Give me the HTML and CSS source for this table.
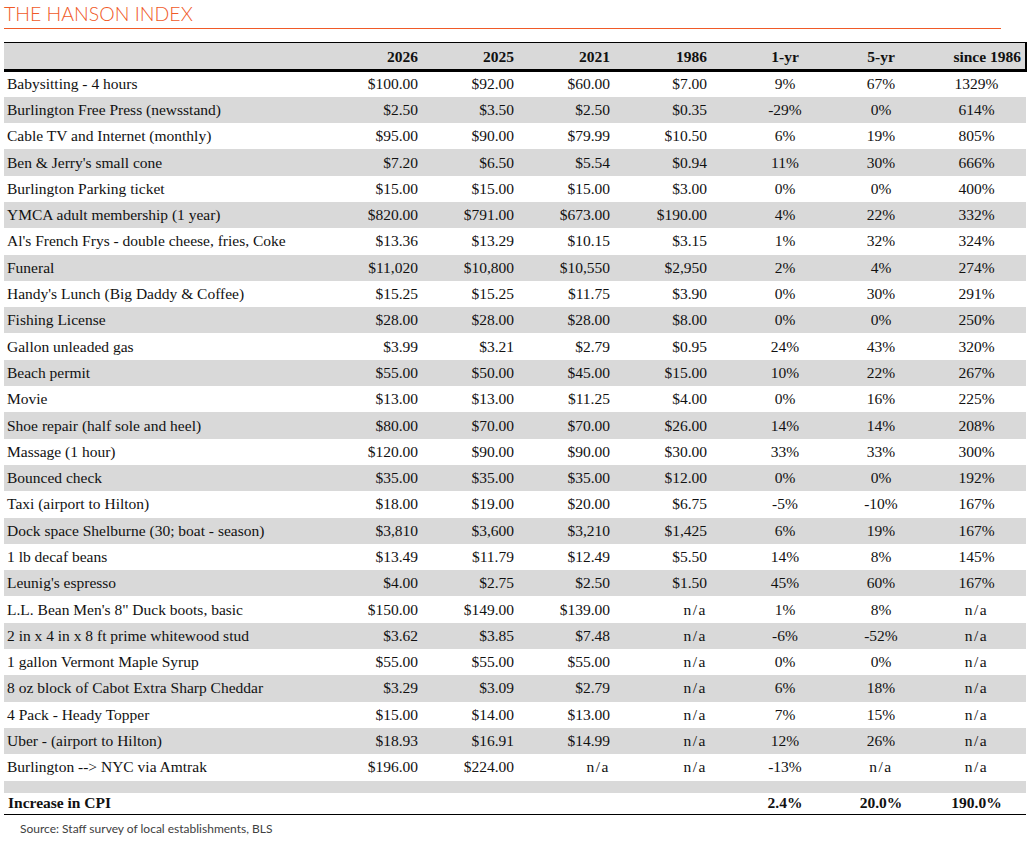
FILE: index.html
```html
<!DOCTYPE html>
<html>
<head>
<meta charset="utf-8">
<link rel="stylesheet" href="styles.css">
</head>
<body>
<div class="page">
  <h1 class="title">THE HANSON INDEX</h1>
  <table class="index">
    <colgroup>
      <col class="c-label"><col class="c-2026"><col class="c-m"><col class="c-m"><col class="c-1986"><col class="c-p"><col class="c-p"><col class="c-last">
    </colgroup>
    <thead>
      <tr><th></th><th class="m">2026</th><th class="m">2025</th><th class="m">2021</th><th class="m">1986</th><th class="p">1-yr</th><th class="p">5-yr</th><th class="p last">since 1986</th></tr>
    </thead>
    <tbody>
      <tr><td>Babysitting - 4 hours</td><td class="m">$100.00</td><td class="m">$92.00</td><td class="m">$60.00</td><td class="m">$7.00</td><td class="p">9%</td><td class="p">67%</td><td class="p">1329%</td></tr>
      <tr><td>Burlington Free Press (newsstand)</td><td class="m">$2.50</td><td class="m">$3.50</td><td class="m">$2.50</td><td class="m">$0.35</td><td class="p">-29%</td><td class="p">0%</td><td class="p">614%</td></tr>
      <tr><td>Cable TV and Internet (monthly)</td><td class="m">$95.00</td><td class="m">$90.00</td><td class="m">$79.99</td><td class="m">$10.50</td><td class="p">6%</td><td class="p">19%</td><td class="p">805%</td></tr>
      <tr><td>Ben &amp; Jerry's small cone</td><td class="m">$7.20</td><td class="m">$6.50</td><td class="m">$5.54</td><td class="m">$0.94</td><td class="p">11%</td><td class="p">30%</td><td class="p">666%</td></tr>
      <tr><td>Burlington Parking ticket</td><td class="m">$15.00</td><td class="m">$15.00</td><td class="m">$15.00</td><td class="m">$3.00</td><td class="p">0%</td><td class="p">0%</td><td class="p">400%</td></tr>
      <tr><td>YMCA adult membership (1 year)</td><td class="m">$820.00</td><td class="m">$791.00</td><td class="m">$673.00</td><td class="m">$190.00</td><td class="p">4%</td><td class="p">22%</td><td class="p">332%</td></tr>
      <tr><td>Al's French Frys - double cheese, fries, Coke</td><td class="m">$13.36</td><td class="m">$13.29</td><td class="m">$10.15</td><td class="m">$3.15</td><td class="p">1%</td><td class="p">32%</td><td class="p">324%</td></tr>
      <tr><td>Funeral</td><td class="m">$11,020</td><td class="m">$10,800</td><td class="m">$10,550</td><td class="m">$2,950</td><td class="p">2%</td><td class="p">4%</td><td class="p">274%</td></tr>
      <tr><td>Handy's Lunch (Big Daddy &amp; Coffee)</td><td class="m">$15.25</td><td class="m">$15.25</td><td class="m">$11.75</td><td class="m">$3.90</td><td class="p">0%</td><td class="p">30%</td><td class="p">291%</td></tr>
      <tr><td>Fishing License</td><td class="m">$28.00</td><td class="m">$28.00</td><td class="m">$28.00</td><td class="m">$8.00</td><td class="p">0%</td><td class="p">0%</td><td class="p">250%</td></tr>
      <tr><td>Gallon unleaded gas</td><td class="m">$3.99</td><td class="m">$3.21</td><td class="m">$2.79</td><td class="m">$0.95</td><td class="p">24%</td><td class="p">43%</td><td class="p">320%</td></tr>
      <tr><td>Beach permit</td><td class="m">$55.00</td><td class="m">$50.00</td><td class="m">$45.00</td><td class="m">$15.00</td><td class="p">10%</td><td class="p">22%</td><td class="p">267%</td></tr>
      <tr><td>Movie</td><td class="m">$13.00</td><td class="m">$13.00</td><td class="m">$11.25</td><td class="m">$4.00</td><td class="p">0%</td><td class="p">16%</td><td class="p">225%</td></tr>
      <tr><td>Shoe repair (half sole and heel)</td><td class="m">$80.00</td><td class="m">$70.00</td><td class="m">$70.00</td><td class="m">$26.00</td><td class="p">14%</td><td class="p">14%</td><td class="p">208%</td></tr>
      <tr><td>Massage (1 hour)</td><td class="m">$120.00</td><td class="m">$90.00</td><td class="m">$90.00</td><td class="m">$30.00</td><td class="p">33%</td><td class="p">33%</td><td class="p">300%</td></tr>
      <tr><td>Bounced check</td><td class="m">$35.00</td><td class="m">$35.00</td><td class="m">$35.00</td><td class="m">$12.00</td><td class="p">0%</td><td class="p">0%</td><td class="p">192%</td></tr>
      <tr><td>Taxi (airport to Hilton)</td><td class="m">$18.00</td><td class="m">$19.00</td><td class="m">$20.00</td><td class="m">$6.75</td><td class="p">-5%</td><td class="p">-10%</td><td class="p">167%</td></tr>
      <tr><td>Dock space Shelburne (30; boat - season)</td><td class="m">$3,810</td><td class="m">$3,600</td><td class="m">$3,210</td><td class="m">$1,425</td><td class="p">6%</td><td class="p">19%</td><td class="p">167%</td></tr>
      <tr><td>1 lb decaf beans</td><td class="m">$13.49</td><td class="m">$11.79</td><td class="m">$12.49</td><td class="m">$5.50</td><td class="p">14%</td><td class="p">8%</td><td class="p">145%</td></tr>
      <tr><td>Leunig's espresso</td><td class="m">$4.00</td><td class="m">$2.75</td><td class="m">$2.50</td><td class="m">$1.50</td><td class="p">45%</td><td class="p">60%</td><td class="p">167%</td></tr>
      <tr><td>L.L. Bean Men's 8" Duck boots, basic</td><td class="m">$150.00</td><td class="m">$149.00</td><td class="m">$139.00</td><td class="m na">n/a</td><td class="p">1%</td><td class="p">8%</td><td class="p na">n/a</td></tr>
      <tr><td>2 in x 4 in x 8 ft prime whitewood stud</td><td class="m">$3.62</td><td class="m">$3.85</td><td class="m">$7.48</td><td class="m na">n/a</td><td class="p">-6%</td><td class="p">-52%</td><td class="p na">n/a</td></tr>
      <tr><td>1 gallon Vermont Maple Syrup</td><td class="m">$55.00</td><td class="m">$55.00</td><td class="m">$55.00</td><td class="m na">n/a</td><td class="p">0%</td><td class="p">0%</td><td class="p na">n/a</td></tr>
      <tr><td>8 oz block of Cabot Extra Sharp Cheddar</td><td class="m">$3.29</td><td class="m">$3.09</td><td class="m">$2.79</td><td class="m na">n/a</td><td class="p">6%</td><td class="p">18%</td><td class="p na">n/a</td></tr>
      <tr><td>4 Pack - Heady Topper</td><td class="m">$15.00</td><td class="m">$14.00</td><td class="m">$13.00</td><td class="m na">n/a</td><td class="p">7%</td><td class="p">15%</td><td class="p na">n/a</td></tr>
      <tr><td>Uber - (airport to Hilton)</td><td class="m">$18.93</td><td class="m">$16.91</td><td class="m">$14.99</td><td class="m na">n/a</td><td class="p">12%</td><td class="p">26%</td><td class="p na">n/a</td></tr>
      <tr><td>Burlington --&gt; NYC via Amtrak</td><td class="m">$196.00</td><td class="m">$224.00</td><td class="m na">n/a</td><td class="m na">n/a</td><td class="p">-13%</td><td class="p na">n/a</td><td class="p na">n/a</td></tr>
      <tr class="spacer"><td colspan="8"></td></tr>
      <tr class="total"><td>Increase in CPI</td><td></td><td></td><td></td><td></td><td class="p">2.4%</td><td class="p">20.0%</td><td class="p">190.0%</td></tr>
    </tbody>
  </table>
  <p class="source">Source: Staff survey of local establishments, BLS</p>
</div>
</body>
</html>
```

FILE: styles.css
```css
html, body {
  margin: 0;
  padding: 0;
  background: #ffffff;
}

.page {
  padding: 0 0 0 4px;
  width: 1022px;
}

.title {
  margin: 0;
  width: 997px;
  height: 29px;
  box-sizing: border-box;
  border-bottom: 1px solid #f05a28;
  font-family: "Lato", "Liberation Sans", sans-serif;
  font-weight: 300;
  font-size: 19.5px;
  line-height: 28px;
  color: #f05a28;
  letter-spacing: 0;
}

.index {
  margin-top: 13px;
  width: 1022px;
  border-collapse: collapse;
  table-layout: fixed;
  font-family: "Liberation Serif", "Times New Roman", serif;
  font-size: 15.5px;
  color: #111;
  border-top: 1px solid #000;
  border-bottom: 1px solid #000;
}

.c-label { width: 330px; }
.c-2026 { width: 88px; }
.c-m { width: 96px; }
.c-1986 { width: 125px; }
.c-p { width: 96px; }
.c-last { width: 95px; }

.index th, .index td {
  padding: 0;
  white-space: nowrap;
  overflow: visible;
}

.index thead tr {
  background: #d9d9d9;
  height: 28px;
}

.index thead th {
  font-weight: bold;
  border-bottom: 3px solid #000;
  vertical-align: middle;
  padding-top: 1px;
}

.index thead th.last {
  border-right: 2px solid #000;
  text-align: right;
  padding-right: 4px;
}

.index tbody tr {
  height: 26.3px;
}

.index tbody tr:nth-child(even) {
  background: #d9d9d9;
}

.index td:first-child {
  padding-left: 3px;
}

.index .m {
  text-align: right;
  padding-right: 4px;
}

.index td:nth-child(5).m, .index th:nth-child(5).m {
  padding-right: 32px;
}

.index .p {
  text-align: center;
  padding-right: 4px;
}

.index .na {
  letter-spacing: 1.5px;
}

.index tbody tr.spacer {
  height: 12px;
  background: #d9d9d9;
}

.index tbody tr.total {
  height: 22px;
  background: #fff;
  font-weight: bold;
}

.index tr.total td:first-child {
  padding-left: 4px;
}

.source {
  margin: 6px 0 0 16px;
  font-family: "Lato", "Liberation Sans", sans-serif;
  font-size: 12px;
  color: #404040;
}
```
